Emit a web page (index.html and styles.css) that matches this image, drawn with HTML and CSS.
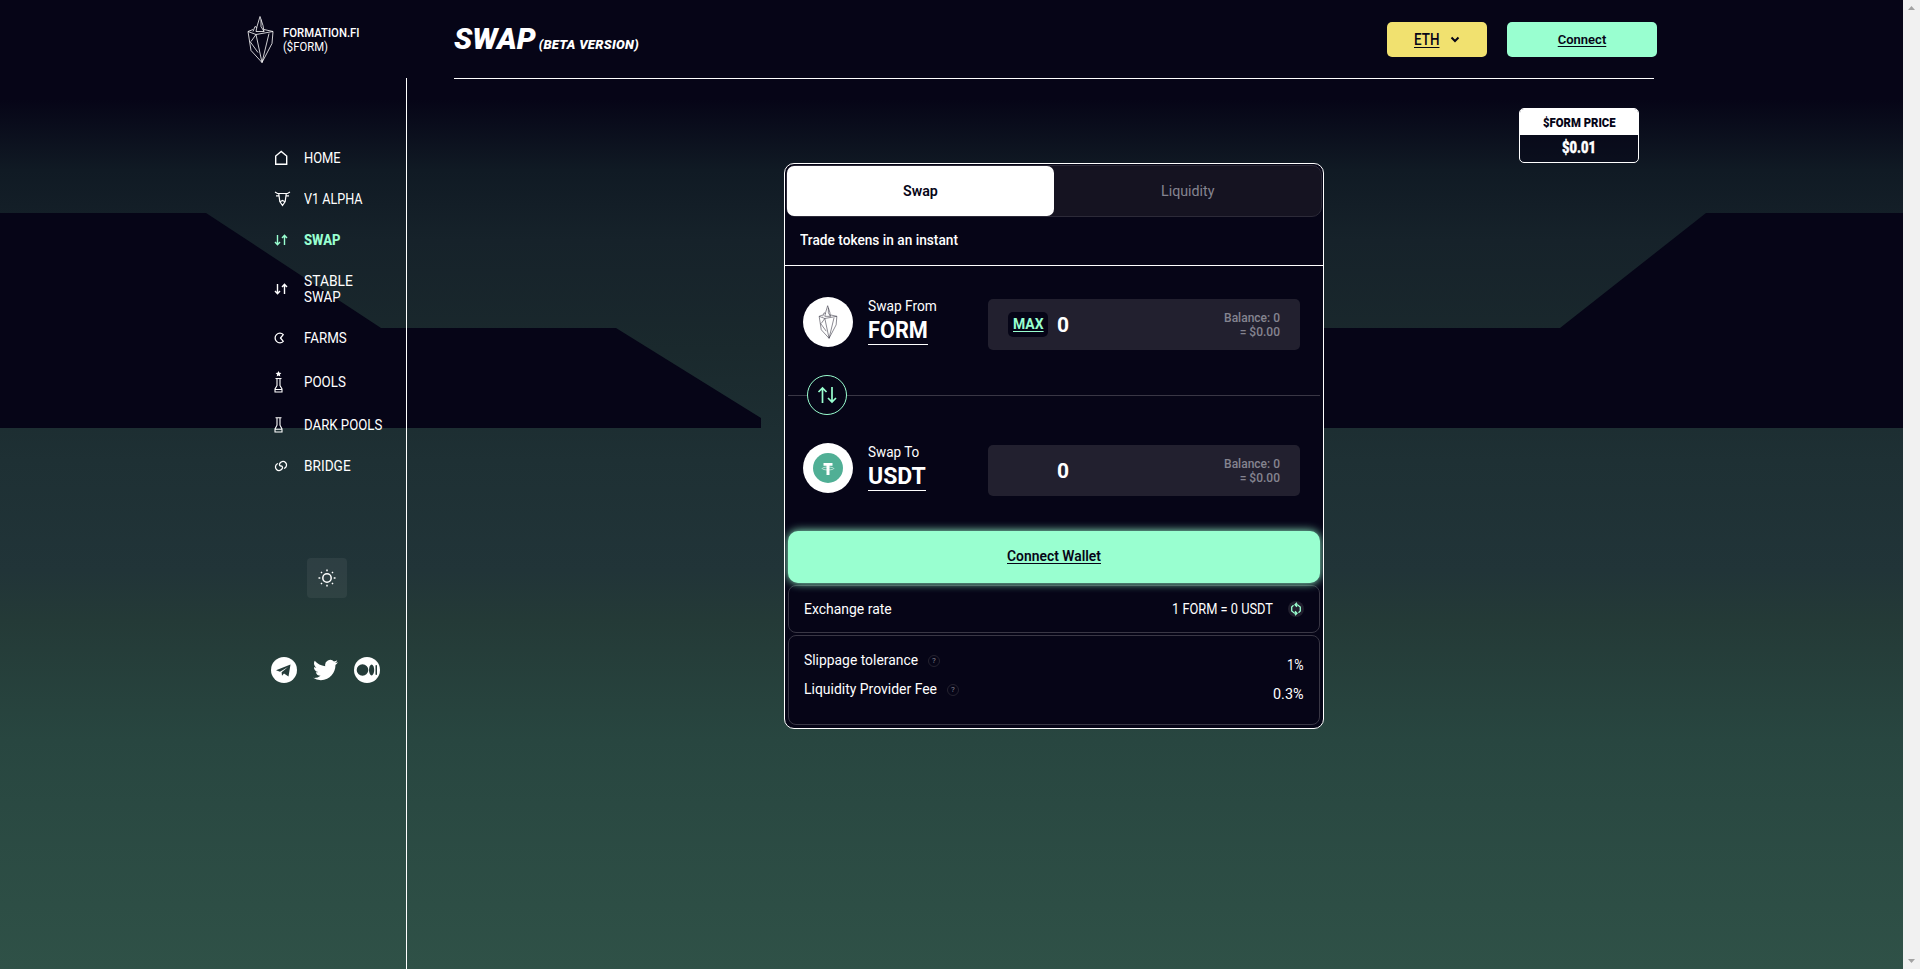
FILE: index.html
```html
<!DOCTYPE html>
<html lang="en">
<head>
<meta charset="utf-8">
<title>Formation.fi Swap</title>
<link rel="stylesheet" href="styles.css">
</head>
<body>
<svg width="0" height="0" class="defs">
  <symbol id="crystal" viewBox="0 0 27 48"><g fill="none" stroke="currentColor" stroke-width=".8" stroke-linejoin="round"><path d="M13 1 10 11 9 16h8l-1-6zM14 4v7l3 5M6 16l2-5 2 1M1 16l5-2M17 14l9 2M1 16l8 3 17-3-1 12-10 19L4 35zM9 19l-5 7M9 19l6 28 7-29M3 26l8 11"/></g></symbol>
  <symbol id="arrows" viewBox="0 0 14 12"><path d="M3.500 1v9.500M1 8l2.500 2.700L6 8M10.500 11V1.500M8 4l2.500-2.700L13 4" fill="none" stroke="currentColor" stroke-width="1.400"/></symbol>
</svg>
<div class="window">
<div class="page">
  <svg class="backdrop" viewBox="0 0 1903 969"><path d="M0 213H206L381 328H616L761 418V428H0zM1200 328H1560L1706 213H1903V428H1200z" fill="#060517"/></svg>
  <aside class="side">
    <a class="brand"><svg width="27" height="49"><use href="#crystal"/></svg><span class="brand-text"><b class="fit t-b1">FORMATION.FI</b><br><b class="fit t-b2">($FORM)</b></span></a>
    <div class="rail">
      <nav class="nav">
        <a class="item"><i><svg width="16" height="16" viewBox="0 0 16 16"><path d="M1.700 14.200V6L7.200 1.500 12.700 6v8.200z" fill="none" stroke="#fff" stroke-width="1.400"/></svg></i><span class="fit t-home">HOME</span></a>
        <a class="item"><i><svg width="18" height="16" viewBox="0 0 18 16"><path d="M1 1 3.500 2.500H13.500L16 1M2 4.800h3M15 4.800h-3M4.800 3l1 7.500 2.700 4 2.700-4 1-7.500M6.500 10.500l2-1 2 1" fill="none" stroke="#fff" stroke-width="1.200"/></svg></i><span class="fit t-v1">V1 ALPHA</span></a>
        <a class="item on"><i><svg width="14" height="12"><use href="#arrows"/></svg></i><span class="fit t-swap">SWAP</span></a>
        <a class="item two"><i><svg width="14" height="12"><use href="#arrows"/></svg></i><span><span class="fit t-stable">STABLE</span><br><span class="fit t-swap2">SWAP</span></span></a>
        <a class="item"><i><svg width="12" height="12" viewBox="0 0 12 12"><path d="M9.300 2.600A4.800 4.800 0 1 0 9.300 9.400L6.500 6z" fill="none" stroke="#fff" stroke-width="1.300" stroke-linejoin="round"/></svg></i><span class="fit t-farms">FARMS</span></a>
        <a class="item pools"><i><svg width="10" height="22" viewBox="0 0 10 22"><path d="m4.500 0 .9 1.800 2 .2-1.500 1.400.4 2-1.800-1-1.800 1 .4-2L1.600 2l2-.2z" fill="#fff"/><path d="M1.500 7.500h6M3 7.500v7L1 18v3h7v-3l-2-3.500v-7M1 18.500h7" fill="none" stroke="#fff" stroke-width="1.100"/></svg></i><span class="fit t-pools">POOLS</span></a>
        <a class="item dark"><i><svg width="10" height="16" viewBox="0 0 10 16"><path d="M1.500.7h6M3 .7v7.500L1 12v3h7v-3L6 8.200V.7M1 12.300h7" fill="none" stroke="#fff" stroke-width="1.100"/></svg></i><span class="fit t-dark">DARK POOLS</span></a>
        <a class="item"><i><svg width="14" height="14" viewBox="0 0 14 14"><path d="M4 4.500A3.600 3.600 0 1 0 8.500 9c.2-1.800-1-2.500-2-2M10 9.500A3.600 3.600 0 1 0 5.500 5c-.2 1.800 1 2.500 2 2" fill="none" stroke="#fff" stroke-width="1.300"/></svg></i><span class="fit t-bridge">BRIDGE</span></a>
      </nav>
      <button class="theme"><svg width="18" height="18" viewBox="0 0 18 18"><circle cx="9" cy="9" r="4.200" fill="none" stroke="#fff" stroke-width="1.500"/><path d="M9 .5v1.800M9 15.700v1.800M.5 9h1.800M15.700 9h1.800M3 3l1 1M14 14l1 1M3 15l1-1M14 4l1-1" stroke="#fff" stroke-width="1.500"/></svg></button>
      <div class="social">
        <svg width="26" height="26" viewBox="0 0 26 26"><circle cx="13" cy="13" r="13" fill="#fff"/><path d="M5 13.200 19.500 7.500 17.500 19.500 13 16.500 11 18.700 10.600 15.200 17 10 9 14.700z" fill="#243b39"/></svg>
        <svg width="25" height="26" viewBox="0 0 24 24"><path d="M23.950 4.570a10 10 0 0 1-2.820.77 4.960 4.960 0 0 0 2.160-2.720c-.95.550-2 .950-3.130 1.180a4.920 4.920 0 0 0-8.380 4.480C7.690 8.100 4.070 6.130 1.640 3.160a4.930 4.930 0 0 0 1.520 6.570 4.900 4.900 0 0 1-2.230-.610v.060a4.920 4.920 0 0 0 3.950 4.830 5 5 0 0 1-2.210.080 4.940 4.940 0 0 0 4.600 3.420A9.870 9.870 0 0 1 0 19.540a14 14 0 0 0 7.550 2.210c9.050 0 14-7.500 14-13.980 0-.210 0-.420-.020-.630a9.940 9.940 0 0 0 2.460-2.550z" fill="#fff"/></svg>
        <svg width="26" height="26" viewBox="0 0 26 26"><circle cx="13" cy="13" r="13" fill="#fff"/><g fill="#243b39"><circle cx="8.500" cy="13" r="5.800"/><ellipse cx="17.600" cy="13" rx="2.600" ry="5.400"/><rect x="21.500" y="8" width="1.500" height="10" rx=".7"/></g></svg>
      </div>
    </div>
  </aside>
  <main class="main">
    <header class="top">
      <h1><span>SWAP</span><small>(BETA VERSION)</small></h1>
      <button class="chain"><u class="fit t-eth">ETH</u><svg width="10" height="7" viewBox="0 0 10 7"><path d="m1.500 1.500 3.500 3.500 3.500-3.500" fill="none" stroke="#060517" stroke-width="2"/></svg></button>
      <button class="connect"><u>Connect</u></button>
    </header>
    <div class="content">
      <section class="card">
        <div class="tabs"><div class="tab active"><span class="fit t-tab">Swap</span></div><div class="tab"><span class="fit t-liq">Liquidity</span></div></div>
        <div class="lead"><span class="fit t-lead">Trade tokens in an instant</span></div>
        <div class="row">
          <div class="coin"><svg width="20" height="34" class="ink"><use href="#crystal"/></svg></div>
          <div class="token"><span class="fit t-from">Swap From</span><br><strong><span class="fit t-form">FORM</span></strong></div>
          <div class="amount"><span class="max"><u class="fit t-max">MAX</u></span><b class="zero">0</b><div class="bal">Balance: 0<br>= $0.00</div></div>
        </div>
        <div class="split"><div class="flip"><svg width="20" height="18" viewBox="0 0 20 18"><path d="M5.500 17V2M1.500 6l4-4 4 4M15 1v15M11 12l4 4 4-4" fill="none" stroke="#99ffd0" stroke-width="1.700"/></svg></div></div>
        <div class="row to">
          <div class="coin"><svg width="30" height="30" viewBox="0 0 30 30"><circle cx="15" cy="15" r="15" fill="#50af95"/><path d="M10.500 10h9v2.800h-3v9.200h-3v-9.200h-3z" fill="#fff"/><ellipse cx="15" cy="15.500" rx="5.800" ry="1.400" fill="none" stroke="#fff" stroke-width=".6"/></svg></div>
          <div class="token"><span class="fit t-to">Swap To</span><br><strong>USDT</strong></div>
          <div class="amount"><span class="max off"></span><b class="zero">0</b><div class="bal">Balance: 0<br>= $0.00</div></div>
        </div>
        <button class="wallet"><u class="fit t-wal">Connect Wallet</u></button>
        <div class="rate"><span class="fit t-ex">Exchange rate</span><span class="fit t-one">1 FORM = 0 USDT</span><svg width="16" height="16" viewBox="0 0 16 16"><circle cx="8" cy="8" r="8" fill="#211f2e"/><path d="M8.500 12.200H6.500L3.700 10V6L5.500 4.300M7.500 3.800h2L12.300 6v4l-1.800 1.700M7 10.200l2 2-2 2M9 5.800l-2-2 2-2" fill="none" stroke="#99ffd0" stroke-width="1.300"/></svg></div>
        <div class="terms">
          <div class="term"><span class="fit t-slip">Slippage tolerance</span><em>?</em><span class="val"><span class="fit t-pct">1%</span></span></div>
          <div class="term"><span class="fit t-lpf">Liquidity Provider Fee</span><em>?</em><span class="val"><span class="fit t-fee">0.3%</span></span></div>
        </div>
      </section>
      <div class="price"><div class="price-h"><span class="fit t-ph">$FORM PRICE</span></div><div class="price-v"><span class="fit t-pv">$0.01</span></div></div>
    </div>
  </main>
</div>
<div class="scroll"><svg width="17" height="17"><path d="M5 10l3.500-4L12 10z" fill="#a3a3a3"/></svg><svg width="17" height="17"><path d="M5 7l3.500 4L12 7z" fill="#a3a3a3"/></svg></div>
</div>
</body>
</html>
```
FILE: styles.css
```css
* { box-sizing: border-box; }
body { margin: 0; font: 500 15px/16px Roboto, "Liberation Sans", sans-serif; color: #fff; background: #060517; overflow: hidden; }
button { font: inherit; border: 0; padding: 0; color: #060517; }
i, em { font-style: normal; }
u { text-underline-offset: 2px; }
.defs { position: absolute; }

/* Condensed labels: each one is narrowed to its set width. */
.fit { display: inline-block; white-space: nowrap; text-align: left; width: var(--w); transform: scaleX(var(--s)); transform-origin: 0 50%; }
.t-b1 { --w: 76.5px; --s: .871; }
.t-b2 { --w: 45px; --s: .87; }
.t-home { --w: 37px; --s: .86; }
.t-v1 { --w: 58.5px; --s: .84; }
.t-swap { --w: 37px; --s: .87; }
.t-stable { --w: 49px; --s: .92; }
.t-swap2 { --w: 37px; --s: .89; }
.t-farms { --w: 43px; --s: .89; }
.t-pools { --w: 42px; --s: .89; }
.t-dark { --w: 79px; --s: .88; }
.t-bridge { --w: 47px; --s: .91; }
.t-eth { --w: 25.5px; --s: .84; }
.t-tab { --w: 35px; --s: .95; }
.t-liq { --w: 54px; --s: .95; }
.t-lead { --w: 158px; --s: .912; }
.t-from { --w: 69px; --s: .915; }
.t-form { --w: 60px; --s: .945; }
.t-max { --w: 30.5px; --s: .93; }
.t-to { --w: 51px; --s: .9; }
.t-wal { --w: 94px; --s: .925; }
.t-ex { --w: 88px; --s: .93; }
.t-one { --w: 101px; --s: .855; margin-left: auto; margin-right: 15px; }
.t-slip { --w: 114px; --s: .925; }
.t-pct { --w: 16.5px; --s: .85; }
.t-lpf { --w: 133px; --s: .93; }
.t-fee { --w: 30.5px; --s: .96; }
.t-ph { --w: 72.5px; --s: .87; }
.t-pv { --w: 34px; --s: .81; }

.window { display: flex; height: 969px; }
.page { position: relative; display: flex; width: 1903px; background: linear-gradient(#060517 0, #060517 100px, #101a24 170px, #16222a 240px, #1a292d 350px, #1e3034 460px, #213438 570px, #243a37 620px, #284640 740px, #2f5147 969px); }
.backdrop { position: absolute; left: 0; top: 0; width: 1903px; height: 969px; }
.scroll { width: 17px; background: #f1f1f1; display: flex; flex-direction: column; justify-content: space-between; }

.side { position: relative; width: 407px; display: flex; flex-direction: column; }
.brand { display: flex; height: 78px; padding: 15px 0 0 247px; gap: 9px; }
.brand-text { font-size: 13px; line-height: 14px; padding-top: 11px; }
.brand-text b { font-weight: 500; }
.brand-text .t-b2 { font-weight: 400; }
.rail { flex: 1; border-right: 1px solid #fff; padding: 59px 0 0 274px; }
.nav { display: flex; flex-direction: column; }
.item { display: flex; align-items: center; height: 41px; font-size: 15px; font-weight: 400; }
.item i { width: 30px; display: flex; }
.on { color: #99ffd0; font-weight: 800; }
.two { height: 57px; }
.pools { height: 47px; }
.dark { height: 39px; margin-bottom: 1px; }
.theme { display: flex; align-items: center; justify-content: center; width: 40px; height: 40px; margin: 72px 0 0 33px; border-radius: 4px; background: rgba(255,255,255,.06); }
.social { display: flex; margin: 59px 0 0 -3px; gap: 16px; }

.main { position: relative; width: 1203px; margin-left: 47px; }
.top { display: flex; height: 79px; padding-top: 22px; align-items: flex-start; position: relative; width: 1203px; }
.top::after { content: ""; position: absolute; left: 0; bottom: 0; width: 1200px; height: 1px; background: #fff; }
h1 { margin: 0; flex: 1; font: italic 900 30px/34px Roboto, sans-serif; }
small { font-size: 13px; margin-left: 3px; letter-spacing: .3px; }
.chain, .connect { height: 35px; border-radius: 5px; display: flex; align-items: center; justify-content: center; }
.chain { width: 100px; background: #f1e16f; gap: 11px; margin-right: 20px; font-size: 16px; }
.connect { width: 150px; background: #99ffd0; font-size: 13px; font-weight: 600; }

.content { display: flex; align-items: flex-start; padding: 29px 18px 0 330px; justify-content: space-between; }
.card { width: 540px; height: 566px; margin-top: 55px; border: 1px solid #fff; border-radius: 10px; background: #060517; padding: 1px; display: flex; flex-direction: column; overflow: hidden; }
.card > * { flex: none; }
.tabs { display: flex; height: 52px; border: 1px solid #2c2a38; border-radius: 10px; background: #151321; }
.tab { flex: 1; display: flex; align-items: center; justify-content: center; padding-bottom: 1px; color: #858490; font-weight: 400; }
.active { background: #fff; color: #060517; border-radius: 7px; font-weight: 600; }
.lead { height: 49px; margin: 0 -1px; border-bottom: 1px solid #fff; padding: 15px 0 0 15px; }
.row { display: flex; padding: 31px 0 0 17px; height: 109px; }
.to { padding-top: 28px; height: 116px; }
.coin { width: 50px; height: 50px; border-radius: 50%; background: #fff; display: flex; align-items: center; justify-content: center; }
.ink { color: #33313f; }
.token { flex: none; width: 135px; padding: 1px 0 0 15px; font-weight: 400; line-height: 17px; }
strong { display: inline-block; font-size: 23px; line-height: 27px; height: 28px; border-bottom: 1px solid #fff; margin-top: 2px; }
.amount { width: 312px; height: 51px; margin-top: 2px; border-radius: 5px; background: #22202f; display: flex; align-items: center; padding: 0 20px; }
.max { width: 40px; height: 25px; border-radius: 5px; background: #060517; color: #99ffd0; text-align: center; line-height: 25px; font-weight: 700; }
.off { background: none; }
.zero { font-size: 21px; margin-left: 9px; flex: 1; }
.bal { text-align: right; font-size: 12px; line-height: 14px; color: #858490; }
.split { height: 40px; margin: 0 2px; padding-left: 19px; background: linear-gradient(#393745, #393745) 0 20px / 100% 1px no-repeat; }
.flip { width: 40px; height: 40px; border: 1px solid #99ffd0; border-radius: 50%; background: #060517; display: flex; align-items: center; justify-content: center; }
.wallet { position: relative; height: 52px; margin: 0 2px; padding-bottom: 2px; border-radius: 10px; background: #99ffd0; font-weight: 600; box-shadow: 0 0 10px #99ffd0; }
.rate { height: 48px; margin: 2px 2px 0; border: 1px solid #393745; border-radius: 8px; padding: 0 15px; display: flex; align-items: center; font-weight: 400; }
.terms { height: 90px; margin: 2px 2px 0; border: 1px solid #393745; border-radius: 8px; padding: 16px 16px 0 15px; font-weight: 400; }
.term { display: flex; height: 29px; }
.term em { width: 12px; height: 12px; border: 1px solid #24222f; border-radius: 50%; margin: 3px 0 0 10px; font-size: 8px; line-height: 10px; text-align: center; color: #858490; }
.val { margin: 5px 0 0 auto; }
.price { width: 120px; height: 55px; border: 1px solid #fff; border-radius: 5px; text-align: center; background: rgba(6,5,23,.5); overflow: hidden; }
.price-h { height: 26px; background: #fff; color: #060517; font-size: 13px; line-height: 27px; font-weight: 900; }
.price-v { font-size: 16px; line-height: 26px; font-weight: 900; -webkit-text-stroke: .4px #fff; }
```
